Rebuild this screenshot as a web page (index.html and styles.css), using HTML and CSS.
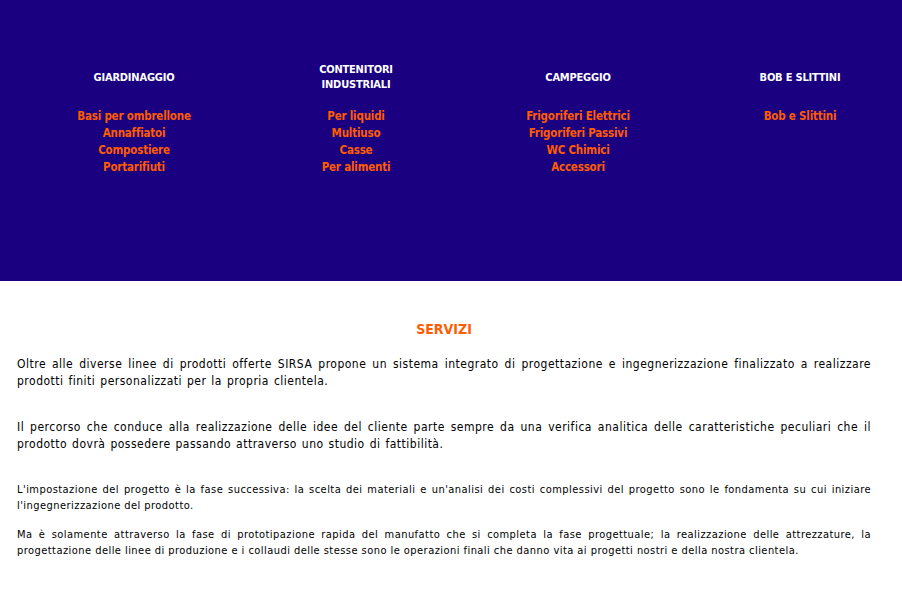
FILE: index.html
```html
<!DOCTYPE html>
<html lang="it">
<head>
<meta charset="utf-8">
<title>SIRSA - Servizi</title>
<link rel="stylesheet" href="styles.css">
</head>
<body>
<header class="menu">
  <div class="menu-grid">
    <div class="col">
      <h3 class="col-title">GIARDINAGGIO</h3>
      <ul class="links">
        <li><a href="#">Basi per ombrellone</a></li>
        <li><a href="#">Annaffiatoi</a></li>
        <li><a href="#">Compostiere</a></li>
        <li><a href="#">Portarifiuti</a></li>
      </ul>
    </div>
    <div class="col">
      <h3 class="col-title">CONTENITORI<br>INDUSTRIALI</h3>
      <ul class="links">
        <li><a href="#">Per liquidi</a></li>
        <li><a href="#">Multiuso</a></li>
        <li><a href="#">Casse</a></li>
        <li><a href="#">Per alimenti</a></li>
      </ul>
    </div>
    <div class="col">
      <h3 class="col-title">CAMPEGGIO</h3>
      <ul class="links">
        <li><a href="#">Frigoriferi Elettrici</a></li>
        <li><a href="#">Frigoriferi Passivi</a></li>
        <li><a href="#">WC Chimici</a></li>
        <li><a href="#">Accessori</a></li>
      </ul>
    </div>
    <div class="col">
      <h3 class="col-title">BOB E SLITTINI</h3>
      <ul class="links">
        <li><a href="#">Bob e Slittini</a></li>
      </ul>
    </div>
  </div>
</header>
<main class="content">
  <h1 class="title">SERVIZI</h1>
  <p class="text">Oltre alle diverse linee di prodotti offerte SIRSA propone un sistema integrato di progettazione e ingegnerizzazione finalizzato a realizzare prodotti finiti personalizzati per la propria clientela.</p>
  <p class="text">Il percorso che conduce alla realizzazione delle idee del cliente parte sempre da una verifica analitica delle caratteristiche peculiari che il prodotto dovrà possedere passando attraverso uno studio di fattibilità.</p>
  <p class="text small">L'impostazione del progetto è la fase successiva: la scelta dei materiali e un'analisi dei costi complessivi del progetto sono le fondamenta su cui iniziare l'ingegnerizzazione del prodotto.</p>
  <p class="text small">Ma è solamente attraverso la fase di prototipazione rapida del manufatto che si completa la fase progettuale; la realizzazione delle attrezzature, la progettazione delle linee di produzione e i collaudi delle stesse sono le operazioni finali che danno vita ai progetti nostri e della nostra clientela.</p>
</main>
</body>
</html>
```
FILE: styles.css
```css
html, body {
  margin: 0;
  padding: 0;
  background: #ffffff;
}
body {
  font-family: "DejaVu Sans Condensed", "DejaVu Sans", sans-serif;
  color: #000000;
}
.menu {
  background: #1a0080;
  height: 281px;
  box-sizing: border-box;
  padding-top: 61px;
}
.menu-grid {
  display: grid;
  grid-template-columns: repeat(4, 200px);
  column-gap: 22px;
  padding-left: 34px;
}
.col {
  display: flex;
  flex-direction: column;
  align-items: center;
  text-align: center;
}
.col-title {
  margin: 0;
  height: 32px;
  display: flex;
  align-items: center;
  justify-content: center;
  color: #ffffff;
  font-size: 11px;
  line-height: 15px;
  font-weight: bold;
  letter-spacing: -0.2px;
}
.links {
  list-style: none;
  margin: 15px 0 0;
  padding: 0;
}
.links li {
  font-size: 11.5px;
  line-height: 17px;
  font-weight: bold;
  letter-spacing: -0.2px;
}
.links a {
  color: #ff5c00;
  text-decoration: none;
}
.content {
  padding: 39px 31px 0 17px;
}
.title {
  margin: 0 0 18px;
  text-align: center;
  color: #ff5c00;
  font-size: 14px;
  line-height: 18px;
  font-weight: bold;
}
.text {
  margin: 0 0 29px;
  font-size: 12px;
  line-height: 17px;
  text-align: justify;
  letter-spacing: 0.5px;
  word-spacing: 1px;
}
.text.small {
  font-size: 11px;
  line-height: 16px;
  margin-bottom: 13px;
  letter-spacing: 0.45px;
  word-spacing: 0;
}
```
